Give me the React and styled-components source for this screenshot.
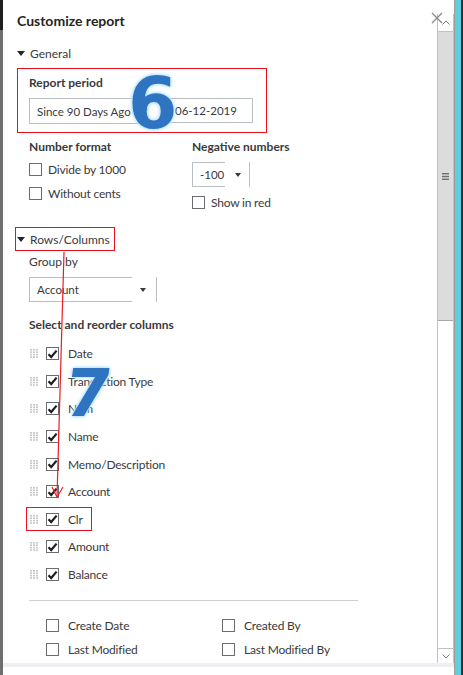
import React from 'react'
import styled, { createGlobalStyle, css } from "styled-components";

const Global = createGlobalStyle`
  html, body { margin: 0; padding: 0; overflow: hidden; background: #fff; }
  body { font-family: "Lato", "Liberation Sans", sans-serif; color: #393a3d; }
`;

const Page = styled.div`
  display: flex;
  width: 463px;
  height: 675px;
  overflow: hidden;
`;

const LeftEdge = styled.div`
  width: 3px;
  flex-shrink: 0;
  background: linear-gradient(#1f1f1f 0, #1f1f1f 30px, #6f6f6f 30px);
`;

const Dialog = styled.div`
  position: relative;
  width: 451px;
  flex-shrink: 0;
  display: flex;
  flex-direction: column;
  background: #fff;
  border-right: 1px solid #9c9c9c;
`;

const Body = styled.div`
  display: flex;
  height: 663px;
`;

const Content = styled.div`
  width: 420px;
  padding-left: 14px;
  overflow: hidden;
`;

const Title = styled.h1`
  margin: 14px 0 0;
  font-size: 14px;
  line-height: 14px;
  font-weight: 700;
  color: #262626;
`;

const Toggle = styled.div`
  display: flex;
  align-items: center;
  gap: 5px;
  height: 16px;
  font-size: 12px;
  color: #393a3d;
  ${p => p.$boxed && css`
    height: 24px;
    width: 100px;
    box-sizing: border-box;
    margin-left: -2px;
    padding-left: 1px;
    border: 1px solid #e8101a;
  `}
  &::before {
    content: '';
    border-left: 4px solid transparent;
    border-right: 4px solid transparent;
    border-top: 5px solid #262626;
  }
`;

const PeriodBox = styled.div`
  margin-top: 7px;
  width: 250px;
  height: 65px;
  box-sizing: border-box;
  border: 1px solid #e8101a;
  padding: 7px 0 0 11px;
`;

const Label = styled.div`
  font-size: 12px;
  line-height: 14px;
  font-weight: ${p => (p.$bold ? 700 : 400)};
  color: #393a3d;
  margin-left: ${p => p.$indent || 0}px;
  margin-top: ${p => p.$top || 0}px;
`;

const FieldRow = styled.div`
  display: flex;
  gap: 5px;
  margin-top: 8px;
`;

const Select = styled.div`
  position: relative;
  box-sizing: border-box;
  width: ${p => p.$w}px;
  height: ${p => p.$h || 26}px;
  margin-top: ${p => p.$top || 0}px;
  margin-left: ${p => p.$indent || 0}px;
  display: flex;
  align-items: center;
  padding-left: 7px;
  font-size: 11.5px;
  color: #393a3d;
  border-left: 1px solid #babec5;
  ${p => p.$split
    ? css`
      border-right: 1px solid #babec5;
      &::before, &::after {
        content: '';
        position: absolute;
        left: 0;
        right: ${p.$split}px;
        height: 1px;
        background: #babec5;
      }
      &::before { top: 0; }
      &::after { bottom: 0; }
    `
    : css`border: 1px solid #babec5;`}
`;

const Caret = styled.span`
  position: absolute;
  right: ${p => p.$right}px;
  top: 50%;
  margin-top: -2px;
  border-left: 3.5px solid transparent;
  border-right: 3.5px solid transparent;
  border-top: 4px solid #393a3d;
`;

const DateInput = styled.div`
  box-sizing: border-box;
  width: 85px;
  height: 25px;
  border: 1px solid #babec5;
  display: flex;
  align-items: center;
  padding-left: 6px;
  font-size: 11.5px;
`;

const TwoCol = styled.div`
  display: flex;
  margin-top: 7px;
  margin-left: 12px;
`;

const Col = styled.div`
  width: ${p => p.$w || 'auto'}px;
  display: flex;
  flex-direction: column;
`;

const CheckRow = styled.label`
  display: flex;
  align-items: center;
  gap: ${p => p.$gap || 6}px;
  height: 24px;
  font-size: 12px;
  letter-spacing: -0.2px;
  color: #393a3d;
  margin-top: ${p => p.$top || 0}px;
`;

const Box = styled.span`
  width: 13px;
  height: 13px;
  box-sizing: border-box;
  border: 1px solid #6b6c72;
  background: #fff;
  display: flex;
  align-items: center;
  justify-content: center;
  flex-shrink: 0;
`;

const ColumnList = styled.div`
  margin-top: 8px;
`;

const ColumnRow = styled.div`
  position: relative;
  display: flex;
  align-items: center;
  height: 27.6px;
  padding-left: 13px;
  font-size: 12px;
  letter-spacing: -0.2px;
  color: #393a3d;
  ${p => p.$marked && css`
    &::after {
      content: '';
      position: absolute;
      left: 9px;
      top: 1px;
      width: 66px;
      height: 24px;
      box-sizing: border-box;
      border: 1px solid #e8101a;
    }
  `}
`;

const Handle = styled.svg`
  width: 8px;
  height: 9px;
  margin-right: 8px;
`;

const RowText = styled.span`
  margin-left: 9px;
`;

const Divider = styled.div`
  margin: 12px 0 0 12px;
  width: 329px;
  height: 1px;
  background: #cfcfcf;
`;

const ExtraGrid = styled.div`
  display: grid;
  grid-template-columns: 176px 176px;
  margin: 12px 0 0 29px;
`;

const Scrollbar = styled.div`
  width: 17px;
  margin-top: 14px;
  display: flex;
  flex-direction: column;
  border-left: 1px solid #c2c2c2;
  border-right: 1px solid #c2c2c2;
  box-sizing: border-box;
`;

const ScrollBtn = styled.div`
  height: ${p => p.$h}px;
  display: flex;
  align-items: center;
  justify-content: center;
  ${p => (p.$down ? 'border-top' : 'border-bottom')}: 1px solid #c2c2c2;
`;

const Thumb = styled.div`
  height: 288px;
  background: #dcdcdc;
  border-bottom: 1px solid #a9a9a9;
  display: flex;
  align-items: center;
  justify-content: center;
`;

const Track = styled.div`
  flex: 1;
`;

const FooterBand = styled.div`
  height: 4px;
  background: #eeeef3;
`;

const Close = styled.svg`
  position: absolute;
  left: 428px;
  top: 12px;
  width: 12px;
  height: 12px;
`;

const BigDigit = styled.div`
  position: absolute;
  left: ${p => p.$x}px;
  top: ${p => p.$y}px;
  font-family: "DejaVu Sans", sans-serif;
  font-weight: 700;
  font-size: ${p => p.$size}px;
  line-height: 1;
  color: #2f74c0;
  transform: ${p => (p.$skew ? 'skewX(-8deg)' : 'none')};
  text-shadow: 0 0 1px #ffffff, 0 0 2px #c9ecff, 0 0 3px #8fd2ff, 0 0 4px #b4e3ff;
  pointer-events: none;
`;

const ArrowLayer = styled.svg`
  position: absolute;
  left: 0;
  top: 0;
  width: 120px;
  height: 510px;
  pointer-events: none;
`;

const RightEdge = styled.div`
  width: 6px;
  flex-shrink: 0;
  background: #5fcfe0;
  border-right: 2px solid #2b2f33;
`;

const Check = () => (
  <svg width="11" height="10" viewBox="0 0 11 10">
    <path d="M1.5 5.2 L4.2 8 L9.6 1.6" fill="none" stroke="#1e1e1e" strokeWidth="2.2" />
  </svg>
);

const Grip = () => (
  <Handle viewBox="0 0 8 9">
    {[0, 3, 6].map(x => [0, 2.4, 4.8, 7.2].map(y => (
      <rect key={x + '-' + y} x={x} y={y} width="2" height="1.6" fill="#c9c9c9" />
    )))}
  </Handle>
);

const columns = ["Date", "Transaction Type", "Num", "Name", "Memo/Description", "Account", "Clr", "Amount", "Balance"];

const App = () => {
  return (
    <Page>
      <Global />
      <LeftEdge />
      <Dialog>
        <Body>
          <Content>
            <Title>Customize report</Title>
            <Toggle style={{ marginTop: 17 }}>General</Toggle>
            <PeriodBox>
              <Label $bold>Report period</Label>
              <FieldRow>
                <Select $w={134}>Since 90 Days Ago<Caret $right={14} /></Select>
                <DateInput>06-12-2019</DateInput>
              </FieldRow>
            </PeriodBox>
            <TwoCol>
              <Col $w={163}>
                <Label $bold>Number format</Label>
                <CheckRow $top={3}><Box />Divide by 1000</CheckRow>
                <CheckRow><Box />Without cents</CheckRow>
              </Col>
              <Col>
                <Label $bold>Negative numbers</Label>
                <Select $w={58} $h={25} $top={8} $split={24}>-100<Caret $right={8} /></Select>
                <CheckRow $top={3}><Box />Show in red</CheckRow>
              </Col>
            </TwoCol>
            <Toggle $boxed style={{ marginTop: 13 }}>Rows/Columns</Toggle>
            <Label $indent={12} $top={4}>Group by</Label>
            <Select $w={128} $h={25} $top={8} $indent={12} $split={24}>Account<Caret $right={10} /></Select>
            <Label $bold $indent={12} $top={16}>Select and reorder columns</Label>
            <ColumnList>
              {columns.map(c => (
                <ColumnRow key={c} $marked={c === "Clr"}>
                  <Grip />
                  <Box><Check /></Box>
                  <RowText>{c}</RowText>
                </ColumnRow>
              ))}
            </ColumnList>
            <Divider />
            <ExtraGrid>
              <CheckRow $gap={9}><Box />Create Date</CheckRow>
              <CheckRow $gap={9}><Box />Created By</CheckRow>
              <CheckRow $gap={9}><Box />Last Modified</CheckRow>
              <CheckRow $gap={9}><Box />Last Modified By</CheckRow>
            </ExtraGrid>
          </Content>
          <Scrollbar>
            <ScrollBtn $h={17}>
              <svg width="8" height="5" viewBox="0 0 8 5"><path d="M0.5 4.5 L4 1 L7.5 4.5" fill="none" stroke="#7a7a7a" strokeWidth="1" /></svg>
            </ScrollBtn>
            <Thumb>
              <svg width="7" height="7" viewBox="0 0 7 7">
                <rect y="0" width="7" height="1.4" fill="#6e6e6e" />
                <rect y="2.8" width="7" height="1.4" fill="#6e6e6e" />
                <rect y="5.6" width="7" height="1.4" fill="#6e6e6e" />
              </svg>
            </Thumb>
            <Track />
            <ScrollBtn $h={14} $down>
              <svg width="8" height="5" viewBox="0 0 8 5"><path d="M0.5 0.5 L4 4 L7.5 0.5" fill="none" stroke="#7a7a7a" strokeWidth="1" /></svg>
            </ScrollBtn>
          </Scrollbar>
        </Body>
        <FooterBand />
        <Close viewBox="0 0 12 12">
          <path d="M1 1 L11 11 M11 1 L1 11" stroke="#8a8a8a" strokeWidth="1.4" />
        </Close>
        <ArrowLayer viewBox="0 0 120 510">
          <path d="M61 252 L54 497" stroke="#ee1c24" strokeWidth="1.2" fill="none" />
          <path d="M49 487 L54 497 L60 487" stroke="#ee1c24" strokeWidth="1.2" fill="none" />
        </ArrowLayer>
        <BigDigit $x={125} $y={68} $size={71}>6</BigDigit>
        <BigDigit $x={62} $y={361} $size={66} $skew>7</BigDigit>
      </Dialog>
      <RightEdge />
    </Page>
  )
}

export default App
